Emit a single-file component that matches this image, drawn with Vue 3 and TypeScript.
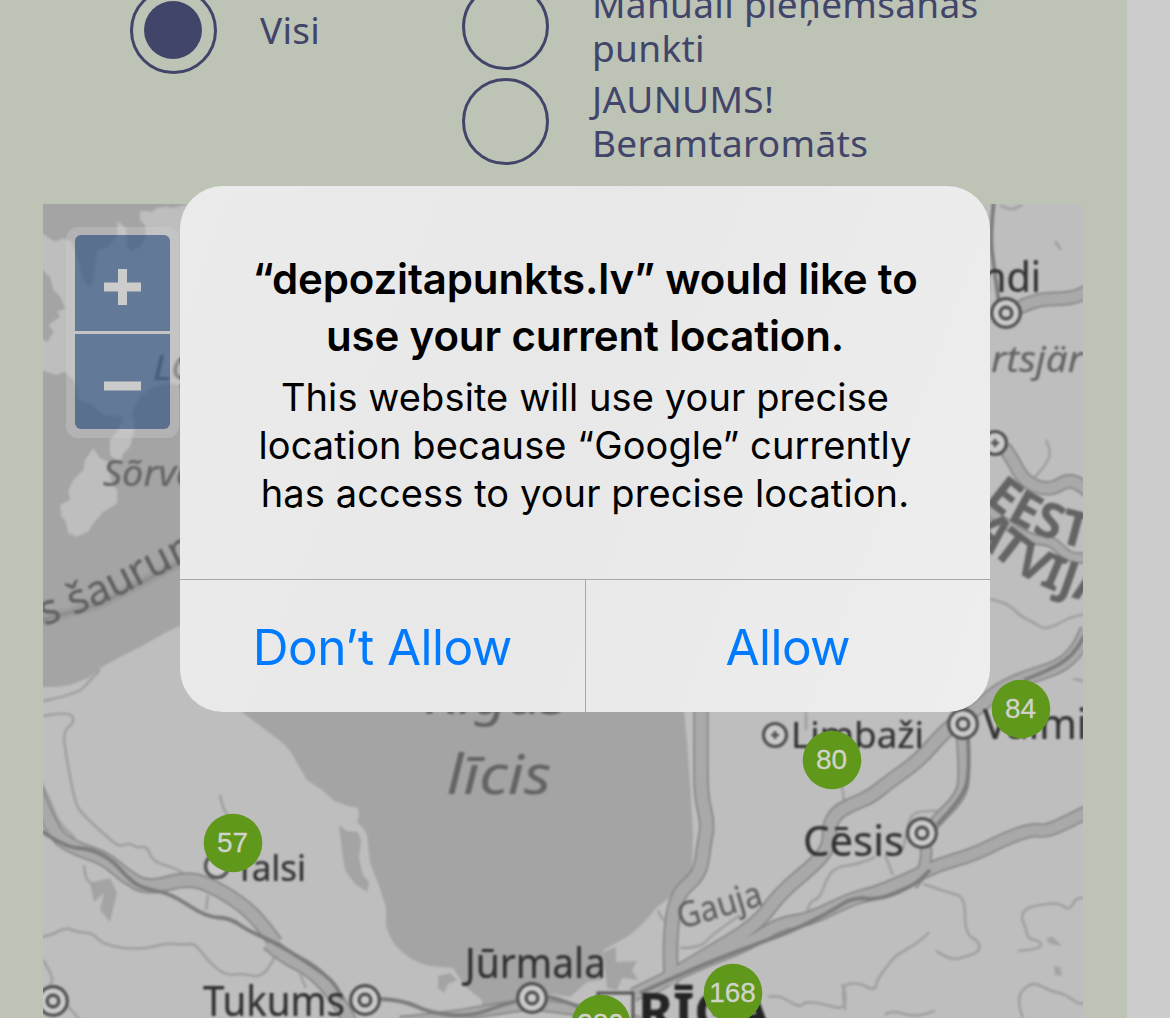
<script setup lang="ts">
interface Road { d: string; w: number }
interface Label {
  text: string; x: number; y: number; size: number; len: number
  kind?: 'water' | 'capital'
}
interface Town { x: number; y: number; small?: boolean; plain?: boolean }
interface Cluster { x: number; y: number; count: string }

// Rounds the corners of an absolute M/L/H/V polyline with quadratic curves.
function smooth(d: string): string {
  const pts: [number, number][] = []
  for (const [, cmd, args] of d.matchAll(/([MLHV])([^MLHV]*)/g)) {
    const n = args.trim().split(/[\s,]+/).map(Number)
    const last = pts[pts.length - 1]
    if (cmd === 'H') pts.push([n[0], last[1]])
    else if (cmd === 'V') pts.push([last[0], n[0]])
    else for (let i = 0; i < n.length; i += 2) pts.push([n[i], n[i + 1]])
  }
  let out = `M${pts[0].join(' ')}`
  for (let i = 1; i < pts.length - 1; i++) {
    const [x, y] = pts[i]
    const [nx, ny] = pts[i + 1]
    out += `Q${x} ${y} ${(x + nx) / 2} ${(y + ny) / 2}`
  }
  return out + `L${pts[pts.length - 1].join(' ')}`
}

const roads: Road[] = [
  { d: 'M701 705L701 750L701 797L708 823L704 845L700 875L677 893L670 933L671 985', w: 12 },
  { d: 'M645 992L703 957L757 925L780 893L820 860L830 843L829 826L837 812L853 804L872 796L890 781L920 760L947 728L980 707L998 690L1027 677L1060 667L1078 650L1087 630', w: 12 },
  { d: 'M633 995L693 965L747 945L780 923L808 920L853 898L873 894L907 880L940 864L973 855L1007 838L1033 829L1047 832L1087 812', w: 11 },
  { d: 'M962 737L965 777L960 797L937 820L925 835L927 865L912 885', w: 9 },
  { d: 'M36 790L52 833L74 848L105 858L125 876L148 889L190 877L222 891L252 912L276 943', w: 12 },
  { d: 'M268 943L285 957L312 970L335 995L350 1022', w: 12 },
  { d: 'M1003 317L1030 299L1072 299L1090 290', w: 11 },
  { d: 'M1004 447L1012 458L1024 482L1050 491L1070 478L1090 492', w: 11 },
  { d: 'M985 508L1000 520L1030 540L1052 540L1068 558L1090 558', w: 8 },
  { d: 'M400 1022L450 1017L490 1010L530 1004L580 1010L640 1022', w: 9 },
]

const rails: string[] = [
  'M40 830L64 847L92 849L113 861L124 874L140 888L170 893L206 917L230 918L247 930L274 942L300 958L333 980L343 1000',
  'M380 999L403 1000L430 1013L470 1017L507 1003L545 995L570 1003L590 1012',
  'M640 993L690 970L740 950L790 932L830 912L853 897L880 900L915 885L930 870',
  'M968 737L970 775L962 797L937 825',
  'M1024 680L1050 670L1072 656L1085 635',
  'M994 200L990 235L994 268L999 303',
]

const minor: string[] = [
  'M43 701L78 694L90 680L100 670',
  'M43 716L70 711L75 722L63 731L66 755L75 803L83 815L115 844L121 846L130 843L137 848L147 846L153 862L175 868L190 877',
  'M40 780L50 800L58 822L75 838',
  'M40 937L50 936L66 927L76 932L93 933L101 943L125 949L150 948L165 943L183 945L195 943L207 960L226 976L241 973L262 978L275 957',
  'M220 795L222 805L227 815', 'M208 895L206 910', 'M84 865L85 880L95 885',
  'M43 960L54 977L50 985', 'M66 1004L80 1020',
  'M990 599L1008 603L1020 616L1033 622L1043 629L1055 626L1068 618L1085 614',
  'M1000 205L1010 211L1022 205', 'M1055 241L1061 250',
  'M1046 440L1052 452L1045 466L1034 478',
  'M1073 679L1085 681',
  'M838 780L843 787L844 805', 'M875 857L860 864L835 867L826 880L820 898L809 902L806 920',
  'M903 850L908 822L915 811L945 811', 'M885 855L893 875',
  'M923 884L950 893L965 897L965 934L980 942L979 952L965 957L952 960L936 951',
  'M929 932L920 942L896 955L888 965L877 980L875 991L860 983L842 984L845 1010',
  'M768 997L778 995L790 1002L800 1007L805 1002L820 1003L844 1010L846 995L842 984',
  'M885 1015L890 1010L915 1017L935 1011',
  'M1018 951L1041 949L1041 941L1028 939L1026 928L1021 918L1025 908L1045 904L1060 903L1069 911L1076 898L1085 898',
  'M1023 1018L1015 998L1032 981L1050 991L1065 994L1078 1004L1085 1003',
  'M680 948L700 948L712 935L740 915',
  'M658 910L661 919L668 921', 'M806 712L806 730',
  'M300 974L306 988',
]

const towns: Town[] = [
  { x: 1006, y: 313 }, { x: 995, y: 443, small: true }, { x: 963, y: 724 },
  { x: 922, y: 833 }, { x: 365, y: 1000 }, { x: 532, y: 998 }, { x: 53, y: 1001 },
  { x: 775, y: 735, small: true }, { x: 217, y: 866, small: true, plain: true },
]

const labels: Label[] = [
  { text: 'ndi', x: 982, y: 292, size: 42, len: 59 },
  { text: 'Talsi', x: 235, y: 881, size: 36.5, len: 71 },
  { text: 'Limbaži', x: 791, y: 748, size: 37, len: 133 },
  { text: 'Valmi', x: 983, y: 739, size: 41, len: 104 },
  { text: 'Cēsis', x: 803, y: 856, size: 41, len: 101 },
  { text: 'Jūrmala', x: 465, y: 978, size: 42, len: 141 },
  { text: 'Tukums', x: 203, y: 1016, size: 41, len: 142 },
  { text: 'rtsjär', x: 991, y: 372, size: 36, len: 92, kind: 'water' },
  { text: 'Sõrve', x: 103, y: 486, size: 36, len: 92, kind: 'water' },
  { text: 'Rīgas', x: 424, y: 714, size: 53, len: 143, kind: 'water' },
  { text: 'līcis', x: 447, y: 794, size: 54, len: 104, kind: 'water' },
  { text: 'LĢ', x: 153, y: 380, size: 35, len: 44, kind: 'water' },
  { text: 'RĪGA', x: 638, y: 1030, size: 52, len: 132, kind: 'capital' },
]

const clusters: Cluster[] = [
  { x: 1021, y: 709, count: '84' }, { x: 832, y: 760, count: '80' },
  { x: 233, y: 843, count: '57' }, { x: 733, y: 993, count: '168' },
  { x: 601, y: 1024, count: '280' },
]
</script>

<template>
  <div class="screen">
    <main class="page">
      <section class="filters">
        <label class="option first"><span class="radio on"></span><span class="name">Visi</span></label>
        <div class="column">
          <label class="option"><span class="radio"></span><span class="name">Manuāli pieņemšanas<br>punkti</span></label>
          <label class="option"><span class="radio"></span><span class="name">JAUNUMS!<br>Beramtaromāts</span></label>
        </div>
      </section>
      <section class="map">
        <svg class="tiles" width="1040" height="814" viewBox="43 204 1040 814">
          <defs>
            <path id="strait" d="M44 626Q100 607 138 586Q162 573 215 548" />
            <path id="eesti" d="M984 500Q1030 545 1130 556" />
            <path id="latvija" d="M970 530Q1018 592 1120 608" />
          </defs>
          <g class="soft">
            <rect x="35" y="196" width="1056" height="830" fill="#bebebe" />
            <g fill="#a4a4a4">
              <path d="M35 196H200V616L165 633L142 646L120 657L102 667L88 678L70 685L55 687H35Z" />
              <path d="M242 712L283 743Q292 752 297 763L307 780L322 790L333 800Q345 806 358 808Q360 816 357 822Q364 828 367 835L370 863L378 883L386 907V925Q389 937 396 946Q410 962 430 966L453 968L458 976L467 988L482 1000L481 1012L497 1006L553 994L570 997L587 982L602 980L603 950L620 941Q640 930 656 908L670 897L692 870L693 833L690 783L687 743L683 700H240Z" />
              <path d="M339 825L347 831L358 832L361 841L359 858L363 875L369 882L367 892L355 884L345 870L342 850Z" />
              <path d="M438 976L450 973L457 980L448 984L444 993L438 988Z" />
              <path d="M90 883L110 878L117 893L110 922L100 910L104 893L94 902Z" />
              <path d="M603 952L616 947V962L637 961L632 970L638 980L622 978L617 990L607 988Z" />
              <path d="M1046 939L1052 936L1062 946L1050 944Z" />
              <path d="M1054 966L1060 967L1062 976L1055 975Z" />
            </g>
            <g fill="#bebebe" transform="translate(40 200) scale(.33333)">
              <path d="M300 35L320 32L335 36L350 25L380 20L400 25L450 10V560L415 555L380 550L340 560L300 590L275 640L285 680L270 740L250 760L240 790L210 765L210 720L235 690L250 650L190 645L150 610L115 600L105 545L75 515L50 525L0 510V415L22 425L40 395L25 375L60 350L50 335L75 325L60 290L40 270L30 230L0 205V95L45 125L70 115L95 125L107 160L118 190L130 240L148 262L160 240L165 200L170 150L205 140L232 105L232 62L258 85L262 140L275 155L300 140L318 110L315 75L300 60Z" />
              <path fill="#a4a4a4" d="M0 200L30 235L40 270L60 290L75 325L50 335L60 350L35 365L25 375L40 395L22 425L0 410Z" />
              <path d="M160 745L135 780L130 810L100 840L85 870L90 900L60 915L65 950L78 965L85 1000L110 1010L145 995L160 970L190 935L232 910L232 870L215 850L205 785L180 775Z" />
            </g>
            <path d="M35 622L100 604L150 578L200 552" fill="none" stroke="#9a9a9a" stroke-width="10" />
            <path d="M35 622L100 604L150 578L200 552" fill="none" stroke="#838383" stroke-width="1.6" />
            <g class="minor"><path v-for="(d, i) in minor" :key="i" :d="smooth(d)" /></g>
            <g class="line" stroke="#868686"><path v-for="(r, i) in roads" :key="i" :d="smooth(r.d)" :stroke-width="r.w + 3.4" /></g>
            <g class="line" stroke="#a9a9a9"><path v-for="(r, i) in roads" :key="i" :d="smooth(r.d)" :stroke-width="r.w" /></g>
            <g class="line" stroke="#7c7c7c" stroke-width="3.8"><path v-for="(d, i) in rails" :key="i" :d="smooth(d)" /></g>
            <path d="M598 993H633V1022H598Z" fill="#c4c4c4" stroke="#555" stroke-width="3" />
            <g v-for="(t, i) in towns" :key="i" fill="#cacaca" stroke="#505050">
              <circle :cx="t.x" :cy="t.y" :r="t.small ? 11.5 : 14.3" stroke-width="3.2" />
              <template v-if="!t.plain">
                <path v-if="t.small" :d="`M${t.x - 4} ${t.y}h8m-4-4v8`" stroke-width="2.6" />
                <circle v-else :cx="t.x" :cy="t.y" r="5.8" stroke-width="3.4" />
              </template>
            </g>
            <text
              v-for="l in labels" :key="l.text" :x="l.x" :y="l.y" :font-size="l.size"
              :textLength="l.len" lengthAdjust="spacingAndGlyphs" :class="['label', l.kind]"
            >{{ l.text }}</text>
            <text class="label river" transform="translate(681 929) rotate(-16.5)" font-size="35" textLength="87" lengthAdjust="spacingAndGlyphs">Gauja</text>
            <text class="label river" font-size="42"><textPath href="#strait">s šaurum</textPath></text>
            <text class="label border" font-size="49" letter-spacing="1.2"><textPath href="#eesti">EEST</textPath></text>
            <text class="label border" font-size="48"><textPath href="#latvija">ATVIJA</textPath></text>
          </g>
          <g v-for="c in clusters" :key="c.count" class="cluster">
            <circle :cx="c.x" :cy="c.y" r="29.3" />
            <text :x="c.x - 0.5" :y="c.y + 9">{{ c.count }}</text>
          </g>
        </svg>
        <div class="zoom">
          <button aria-label="+"><svg width="38" height="38" viewBox="0 0 38 38"><path d="M0 19h37M18.500 1v36" /></svg></button>
          <button aria-label="−"><svg width="38" height="38" viewBox="0 0 38 38"><path d="M0 19h37" /></svg></button>
        </div>
      </section>
    </main>
    <div class="dialog" role="alertdialog">
      <div class="message">
        <h1>“depozitapunkts.lv” would like to<br>use your current location.</h1>
        <p>This website will use your precise<br>location because “Google” currently<br>has access to your precise location.</p>
      </div>
      <div class="actions">
        <button>Don’t Allow</button>
        <button>Allow</button>
      </div>
    </div>
  </div>
</template>

<style>
body { background: #ccc; overflow: hidden; }
</style>

<style scoped>
* { box-sizing: border-box; }
.screen { position: relative; width: 1170px; height: 1018px; overflow: hidden; background: #ccc; }
.page { width: 1126.5px; height: 1018px; background: #bdc3b5; }
.filters { display: flex; height: 204px; padding-left: 129.5px; font: 37px/43.5px "Noto Sans", sans-serif; letter-spacing: .3px; color: #42456a; }
.option { display: flex; gap: 43.5px; align-items: center; height: 87px; white-space: nowrap; }
.name { margin-top: -2px; }
.first { width: 332px; margin-top: -13.5px; }
.first .name { margin-top: 0; }
.column { display: flex; flex-direction: column; gap: 8px; margin-top: -17px; }
.radio { flex: none; width: 87px; height: 87px; border: 3px solid #42456a; border-radius: 50%; display: grid; place-items: center; }
.radio.on::before { content: ""; width: 58px; height: 58px; border-radius: 50%; background: #42456a; }
.map { position: relative; width: 1040px; height: 814px; margin-left: 43px; overflow: hidden; }
.tiles { display: block; }
.soft { filter: blur(.9px); }
.line, .minor { fill: none; stroke-linejoin: round; }
.minor { stroke: #a0a0a0; stroke-width: 2.6; }
.label { font-family: "Noto Sans", sans-serif; fill: #303030; stroke: #303030; stroke-width: .2px; }
.water { font-style: italic; fill: #646464; stroke: #646464; }
.river { fill: #606060; stroke: #606060; }
.border { font-weight: 700; fill: #646464; stroke: #646464; }
.capital { font-weight: 700; fill: #242424; stroke: #242424; }
.cluster circle { fill: #5f981a; }
.cluster text { font: 28px "Liberation Sans", sans-serif; fill: #d0d3ca; stroke: #d0d3ca; stroke-width: .3px; text-anchor: middle; }
.zoom { position: absolute; left: 23px; top: 23px; width: 113px; height: 211px; padding: 8px 9px 9px; border-radius: 12px; background: rgba(204, 204, 204, .38); display: flex; flex-direction: column; gap: 3px; }
.zoom button { flex: 1; display: grid; place-items: center; border: 0; padding: 0; background: rgba(0, 45, 105, .5); border-radius: 6px 6px 0 0; }
.zoom button:last-child { border-radius: 0 0 6px 6px; }
.zoom svg { fill: none; stroke: #ccc; stroke-width: 9; margin-top: 9px; }
.dialog { position: absolute; left: 180px; top: 186px; width: 810px; height: 526px; border-radius: 43px; background: linear-gradient(110deg, #ebebeb, #e8e8e8 45%, #eeeeee); display: flex; flex-direction: column; overflow: hidden; font-family: Inter, sans-serif; text-align: center; color: #000; }
.message { height: 393px; padding-top: 64px; white-space: nowrap; }
h1 { margin: 0; font-size: 42px; line-height: 57px; font-weight: 600; letter-spacing: -.14px; }
p { margin: 9px 0 0; font-size: 38px; line-height: 48px; letter-spacing: .1px; }
.actions { display: flex; flex: 1; border-top: 1px solid #a8a8a8; }
.actions button { flex: 1; border: 0; padding: 2px 0 0; background: none; font: 49.5px Inter, sans-serif; letter-spacing: -.55px; color: #007aff; }
.actions button + button { border-left: 1px solid #a8a8a8; }
</style>
